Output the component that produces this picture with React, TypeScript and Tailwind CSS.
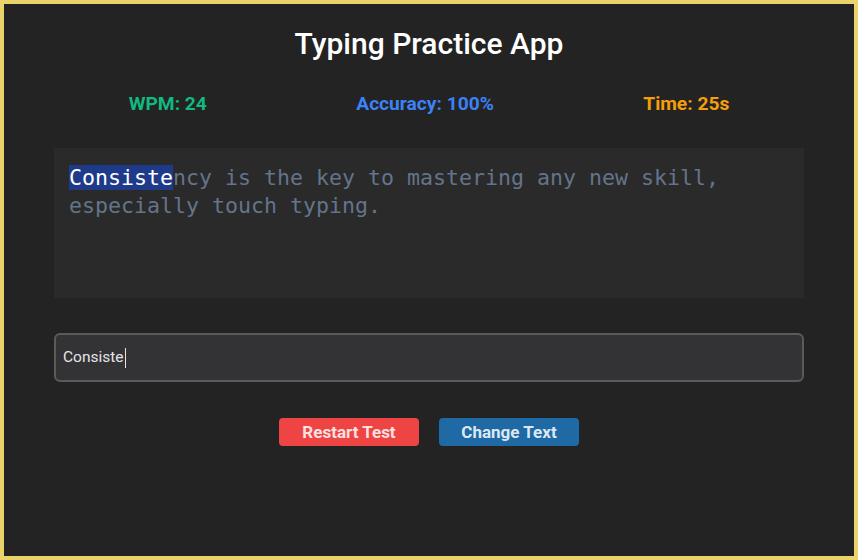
export default function App() {
  const target = 'Consistency is the key to mastering any new skill, especially touch typing.'
  const typed = 'Consiste'

  return (
    <div
      className="h-[560px] w-full border-4 border-[#ebd36b] bg-[#232323] px-[50px] flex flex-col"
      style={{ fontFamily: 'Roboto, "Liberation Sans", sans-serif' }}
    >
      <h1 className="mt-[22px] h-[36px] text-center text-[30px] leading-[36px] font-medium text-white">
        Typing Practice App
      </h1>

      <div className="mt-[30px] flex h-[24px] justify-around text-[19.2px] leading-[24px] font-bold">
        <span className="text-[#10b981]">WPM: 24</span>
        <span className="text-[#3b82f6]">Accuracy: 100%</span>
        <span className="text-[#f59e0b]">Time: 25s</span>
      </div>

      <div
        className="mt-[32px] h-[150px] bg-[#2a2a2a] px-[15px] pt-[16px] text-[21.6px] leading-[28px] text-[#64748b]"
        style={{ fontFamily: '"DejaVu Sans Mono", monospace' }}
      >
        <span className="bg-[#1e3a8a] text-white">{typed}</span>
        {target.slice(typed.length)}
      </div>

      <div className="mt-[35px] h-[49px] rounded-[6px] border-2 border-[#5a5a5a] bg-[#333336] px-[7px] flex items-center text-[15.5px] text-[#e5e5e5]">
        <span>{typed}</span>
        <span className="ml-px h-[20px] w-px bg-[#e5e5e5]" />
      </div>

      <div className="mt-[36px] flex justify-center gap-[20px]">
        <button className="h-[28px] w-[140px] rounded-[4px] bg-[#ef4444] text-[17px] leading-[28px] font-bold text-[#fde0e0]">
          Restart Test
        </button>
        <button className="h-[28px] w-[140px] rounded-[4px] bg-[#1f6aa5] text-[17px] leading-[28px] font-bold text-[#dbe8f5]">
          Change Text
        </button>
      </div>
    </div>
  )
}
